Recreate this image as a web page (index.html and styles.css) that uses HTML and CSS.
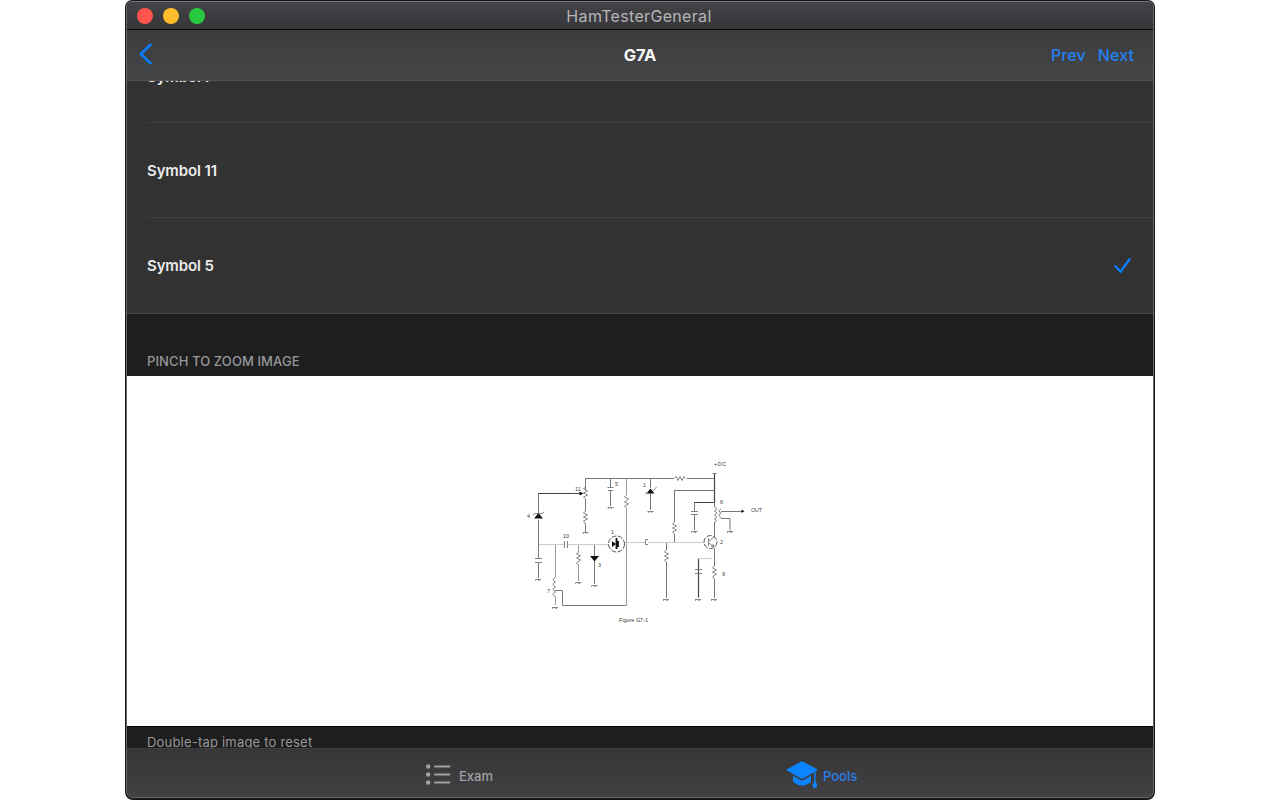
FILE: index.html
```html
<!DOCTYPE html>
<html lang="en">
<head>
<meta charset="utf-8">
<title>HamTesterGeneral</title>
<link rel="stylesheet" href="styles.css">
</head>
<body>
<div class="window">
  <div class="pane">
    <header class="titlebar">
      <div class="lights"><i class="light red"></i><i class="light yellow"></i><i class="light green"></i></div>
      <span class="app-name">HamTesterGeneral</span>
    </header>
    <nav class="navbar">
      <svg class="back" width="14" height="24" viewBox="0 0 14 24"><path d="M11.5 2.8 1.8 12l9.7 9.2" fill="none" stroke="#0a7dfb" stroke-width="2.6" stroke-linecap="round" stroke-linejoin="round"/></svg>
      <span class="nav-title">G7A</span>
      <div class="nav-actions"><span class="prev">Prev</span><span class="next">Next</span></div>
    </nav>
    <main class="content">
      <div class="row row-first"><span class="seven">Symbol 7</span></div>
      <div class="row"><span class="eleven">Symbol 11</span></div>
      <div class="row row-last"><span class="five">Symbol 5</span>
        <svg class="check" width="18" height="18" viewBox="0 0 18 18"><path d="M1.500 9.300 6.500 14.800 15.500 2.200" fill="none" stroke="#0a7dfb" stroke-width="2.4" stroke-linecap="round" stroke-linejoin="round"/></svg>
      </div>
      <div class="section-header"><span class="pinch">PINCH TO ZOOM IMAGE</span></div>
      <div class="figure">
        <svg class="schematic" width="260" height="180" viewBox="520 455 260 180">
          <g class="wire">
            <path d="M538.5 493v21M538.5 520v38M538.5 563v15M585.5 478v12M585.5 499v12M585.5 524v8M610.5 478v9M610.5 490v16M650.500 478v10M650.500 493v17M585 478.500h89M687 478.500h27M674.500 490v32M674.500 534v8M674 490.500h40M694.500 503v8M694.500 514v16M694 502.500h20M721 511.500h22M721 518.500h9v12M666.500 542v8M666.500 562v36M698.500 559v10M698.500 573v25M714.500 548v18M714.500 579v19M714.500 522v15M594.500 544v12M594.500 561v23M555 590.500h7.500v15h64"/>
          </g>
          <path class="soft" d="M626.5 478v17M626.5 508v97.500M578.500 544v8M578.500 565v16M555.500 544v33M555.500 597v8"/>
          <path class="faint" d="M539 544.500h25M568 544.500h41M624 542.500h21M648 542.500h56M698 558.500h14"/>
          <path class="strong" d="M538 493.500h44M714.500 473v30M694.500 502.500h20M698.500 559v38"/>
          <path class="wire" d="M714.500 502v5"/>
          <g class="zig">
            <path d="M585.500 487l-2 2 4 2-4 2 4 2-4 2 2 2M585.500 511l-2 2 4 2-4 2 4 2-4 2 2 3M626.500 495l-2 2 4 2-4 3 4 2-4 2 2 2M674 478.500l2-2 2 4 2-4 2 4 2-4 2 2M674.500 522l-2 2 4 2-4 2 4 2-4 2 2 2M666.500 550l-2 2 4 2-4 2 4 2-4 2 2 2M714.500 566l-2 2 4 2-4 2 4 2-4 3 2 2M578.500 552l-2 2 4 2-4 2 4 2-4 3 2 2"/>
            <path d="M714.500 507q4 2 0 4q4 2 0 4q4 2 0 4q4 2 0 3M721 509q-4 2 0 4q-4 2 0 5M555.500 577q-5 3 0 5q-5 2 0 5q-5 2 0 5q-5 2 0 5"/>
          </g>
          <g class="plates">
            <path d="M607.500 487.500h6M608 490.500h5M691 511.500h7M691 514.500h7M695 569.500h7M695 573.500h7M535 558.500h7M535 562.500h7M564.500 541v7M567.500 541v7M645.500 539v6M646 539.500h2M646 544.500h2"/>
            <path d="M607.500 507.500h6M582.500 532.500h6M647.500 511.500h6M691.500 531.500h6M727 531.500h6M535.500 579.500h5M575.500 582.500h6M591.500 585.500h6M552 607.500h6M663 599.500h6M695 599.500h6M711 599.500h6"/>
          </g>
          <path class="grounds" d="M608 509l2-2 2 2M583 534l2-2 2 2M648 513l2-2 2 2M691 533l2-2 2 2 2-2M727 533l2-2 2 2 2-2M535 581l2-2 2 2 2-2M575 584l2-2 2 2 2-2M591 587l2-2 2 2 2-2M552 609l2-2 2 2 2-2M663 601l2-2 2 2 2-2M695 601l2-2 2 2 2-2M711 601l2-2 2 2 2-2"/>
          <path class="solid" d="M538.500 513l4.500 5.500h-9zM650.500 488.500l4 5h-8zM594.500 561.500l-4.500-5.500h9zM579.500 491.500l4 2-4 2zM741.500 509.500l3 1.800-3 1.800zM612 541l4 3-4 3z"/>
          <path class="plates" d="M533 515l2-1.500h7l2-1.500M645 494l3-2M653 491l3.500-4M712.500 473.500h4"/>
          <circle class="ring" cx="616.500" cy="544" r="8"/>
          <path class="bar" d="M616.500 538v11M618 541v6"/>
          <circle class="ring" cx="710.500" cy="542" r="6.500"/>
          <path class="zig" d="M708.500 538v8M709 541l5-4M709 543l5 4M711 546l3 1-1-3"/>
          <g class="labels">
            <text x="714" y="466" textLength="12">+DC</text>
            <text x="751" y="512" textLength="11">OUT</text>
            <text x="527" y="518">4</text><text x="575" y="491">11</text>
            <text x="615" y="486">5</text><text x="643" y="487">1</text>
            <text x="720" y="504">6</text><text x="720" y="544">2</text>
            <text x="722" y="576">9</text><text x="563" y="538">10</text>
            <text x="611" y="534">1</text><text x="598" y="567">3</text>
            <text x="547" y="593">7</text>
            <text class="caption" x="619" y="622" textLength="29">Figure G7-1</text>
          </g>
        </svg>
      </div>
      <div class="section-footer"><span class="reset">Double-tap image to reset</span></div>
    </main>
    <footer class="tabbar">
      <div class="tab">
        <svg width="26" height="22" viewBox="0 0 26 22"><g fill="#a1a1a3"><circle cx="2.200" cy="2.500" r="2.200"/><circle cx="2.200" cy="10.500" r="2.200"/><circle cx="2.200" cy="18.500" r="2.200"/></g><path d="M9 2.500h14.500M9 10.500h14.500M9 18.500h14.500" stroke="#a1a1a3" stroke-width="2" stroke-linecap="round"/></svg>
        <span class="exam">Exam</span>
      </div>
      <div class="tab tab-active">
        <svg width="32" height="28" viewBox="0 0 32 28"><path fill="#0b84ff" d="M15.200.5Q16 .2 16.800.5L31 8.300q.8.700 0 1.300L17 17.500q-1 .5-2 0L1 9.600q-.8-.6 0-1.300zM7 14.700l7 4.100q2 1.100 4 0l7-4.100v6q-3.500 3.700-9 3.700T7 20.700zM28.100 11h1.500v10l1.700 2.500-1.200 3.500h-2.600l-1.200-3.500 1.800-2.500z"/></svg>
        <span class="pools">Pools</span>
      </div>
    </footer>
  </div>
</div>
</body>
</html>
```
FILE: styles.css
```css
* { box-sizing: border-box; }
body {
  margin: 0;
  width: 1280px;
  height: 800px;
  overflow: hidden;
  background: #fff;
  font-family: Inter, "Liberation Sans", sans-serif;
  display: flex;
  justify-content: center;
}
span { white-space: nowrap; }
.window {
  width: 1030px;
  height: 800px;
  padding: 1px 1px 2px;
  background: #171717;
  border-radius: 7px 7px 8px 8px;
}
.pane {
  height: 797px;
  border: 1px solid #68686a;
  border-top-color: #77777a;
  border-radius: 6px 6px 7px 7px;
  overflow: hidden;
  display: flex;
  flex-direction: column;
  background: #323232;
}
.titlebar {
  flex: 0 0 28px;
  display: grid;
  grid-template-columns: 1fr auto 1fr;
  align-items: center;
  padding: 0 12px 0 10px;
  background: linear-gradient(#434347, #37373a);
  border-bottom: 1px solid #050505;
}
.lights { display: flex; gap: 10px; }
.light { width: 16px; height: 16px; border-radius: 50%; }
.red { background: #ff544d; }
.yellow { background: #ffbd2e; }
.green { background: #28c940; }
.app-name { font-size: 16px; letter-spacing: .33px; color: #b5b5b7; padding-top: 1px; }
.navbar {
  flex: 0 0 51px;
  display: grid;
  grid-template-columns: 1fr auto 1fr;
  align-items: center;
  padding: 0 19px 3px 12px;
  background: linear-gradient(#3b3c3e, #454648);
  border-bottom: 1px solid #535355;
}
.nav-title { font-size: 16.500px; font-weight: 700; color: #f7f7f7; letter-spacing: 0; padding: 2px 0 0 7px; }
.nav-actions { display: flex; justify-content: flex-end; gap: 12px; padding-top: 2px; font-size: 16px; font-weight: 500; letter-spacing: .1px; color: #2281f3; }
.content { flex: 1; display: flex; flex-direction: column; min-height: 0; overflow: hidden; }
.row {
  flex: 0 0 95px;
  margin-left: 20px;
  padding-right: 21px;
  display: flex;
  align-items: center;
  justify-content: space-between;
  border-bottom: 1px solid #414141;
  font-size: 15px;
  letter-spacing: -.12px;
  font-weight: 600;
  color: #ebebeb;
}
.row-first { flex-basis: 42px; align-items: flex-start; overflow: hidden; }
.seven { margin-top: -14px; }
.row-last { flex-basis: 96px; margin-left: 0; padding-left: 20px; border-color: #454545; }
.section-header {
  flex: 0 0 62px;
  padding: 39px 20px 0;
  background: #1e1e1e;
  color: #97979a;
  font-size: 13px;
  letter-spacing: .1px;
  font-weight: 500;
  line-height: 17px;
}
.figure {
  flex: 0 0 351px;
  display: flex;
  justify-content: center;
  align-items: center;
  padding: 0 0 12px 20px;
  background: #fff;
  border-bottom: 1px solid #050505;
}
.section-footer { flex: 1; padding: 7px 20px 0; background: #1e1e1e; color: #97979a; font-size: 13px; letter-spacing: .2px; line-height: 16px; }
.tabbar {
  flex: 0 0 49px;
  display: grid;
  grid-template-columns: 299px 360px 1fr;
  background: linear-gradient(#363639, #414144);
  border-top: 1px solid #3e3e40;
}
.tab { grid-column: 2; display: flex; align-items: center; gap: 7px; padding-top: 3px; color: #a1a1a3; font-size: 13px; font-weight: 500; }
.tab span { padding-top: 2px; }
.tab-active { grid-column: 3; gap: 5px; color: #2b7fe8; }
.schematic { display: block; overflow: visible; }
.schematic path, .schematic circle { fill: none; }
.wire { stroke: #777; stroke-width: 1; }
.soft { stroke: #999; stroke-width: 1; }
.faint { stroke: #cdcdcd; }
.strong { stroke: #444; stroke-width: 1.2; }
.zig { stroke: #777; stroke-width: .9; }
.plates { stroke: #777; stroke-width: .9; }
.grounds { stroke: #888; stroke-width: .8; }
.schematic .solid { fill: #111; }
.ring { stroke: #555; stroke-width: 1; stroke-dasharray: 5 1.500; }
.bar { stroke: #111; stroke-width: 1.800; }
.labels { font-family: "Liberation Sans", Arial, sans-serif; font-size: 5.500px; fill: #444; }
```
